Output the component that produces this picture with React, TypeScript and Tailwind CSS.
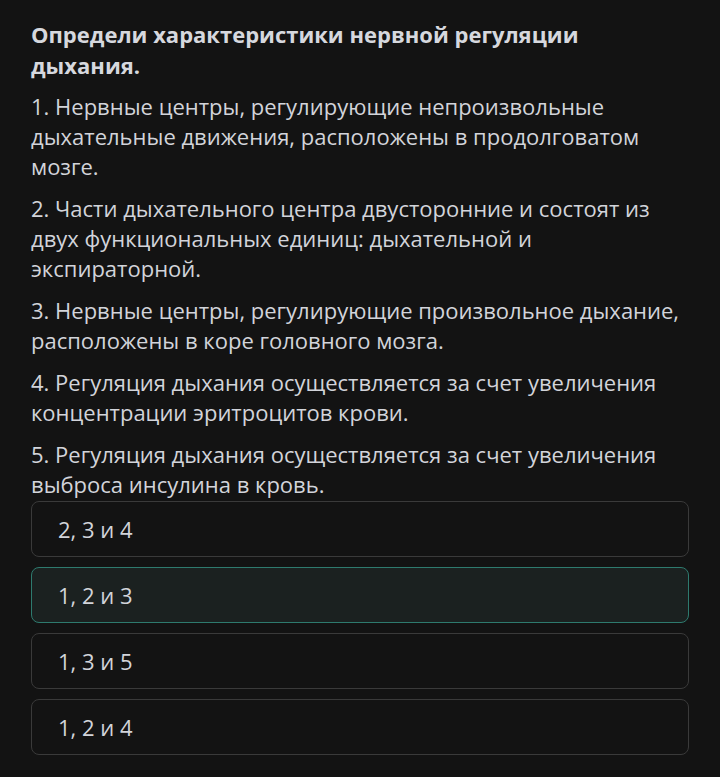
const items = [
  "1. Нервные центры, регулирующие непроизвольные дыхательные движения, расположены в продолговатом мозге.",
  "2. Части дыхательного центра двусторонние и состоят из двух функциональных единиц: дыхательной и экспираторной.",
  "3. Нервные центры, регулирующие произвольное дыхание, расположены в коре головного мозга.",
  "4. Регуляция дыхания осуществляется за счет увеличения концентрации эритроцитов крови.",
  "5. Регуляция дыхания осуществляется за счет увеличения выброса инсулина в кровь.",
];

const options = [
  { label: "2, 3 и 4", selected: false },
  { label: "1, 2 и 3", selected: true },
  { label: "1, 3 и 5", selected: false },
  { label: "1, 2 и 4", selected: false },
];

export default function App() {
  return (
    <div className="w-[720px] h-[777px] bg-[#131313] font-['Open_Sans',sans-serif] text-[#d2d4da] overflow-hidden">
      <div className="pl-[31px] pr-[31px] pt-[19px]">
        <h1 className="text-[22px] font-bold leading-[31px] text-[#d6d8de] mb-[10px]">
          Определи характеристики нервной регуляции дыхания.
        </h1>
        <div className="flex flex-col gap-[12px]">
          {items.map((t, i) => (
            <p key={i} className="text-[22px] leading-[30px]">{t}</p>
          ))}
        </div>
        <div className="flex flex-col gap-[10px] mt-[2px]">
          {options.map((o, i) => (
            <div
              key={i}
              className={
                o.selected
                  ? "h-[56px] rounded-[8px] border border-[#2e7a6e] bg-[#1b2120] flex items-center pl-[26px]"
                  : "h-[56px] rounded-[8px] border border-[#3a3a3a] bg-[#131313] flex items-center pl-[26px]"
              }
            >
              <span className="text-[22px] text-[#d2d4da]">{o.label}</span>
            </div>
          ))}
        </div>
      </div>
    </div>
  );
}
